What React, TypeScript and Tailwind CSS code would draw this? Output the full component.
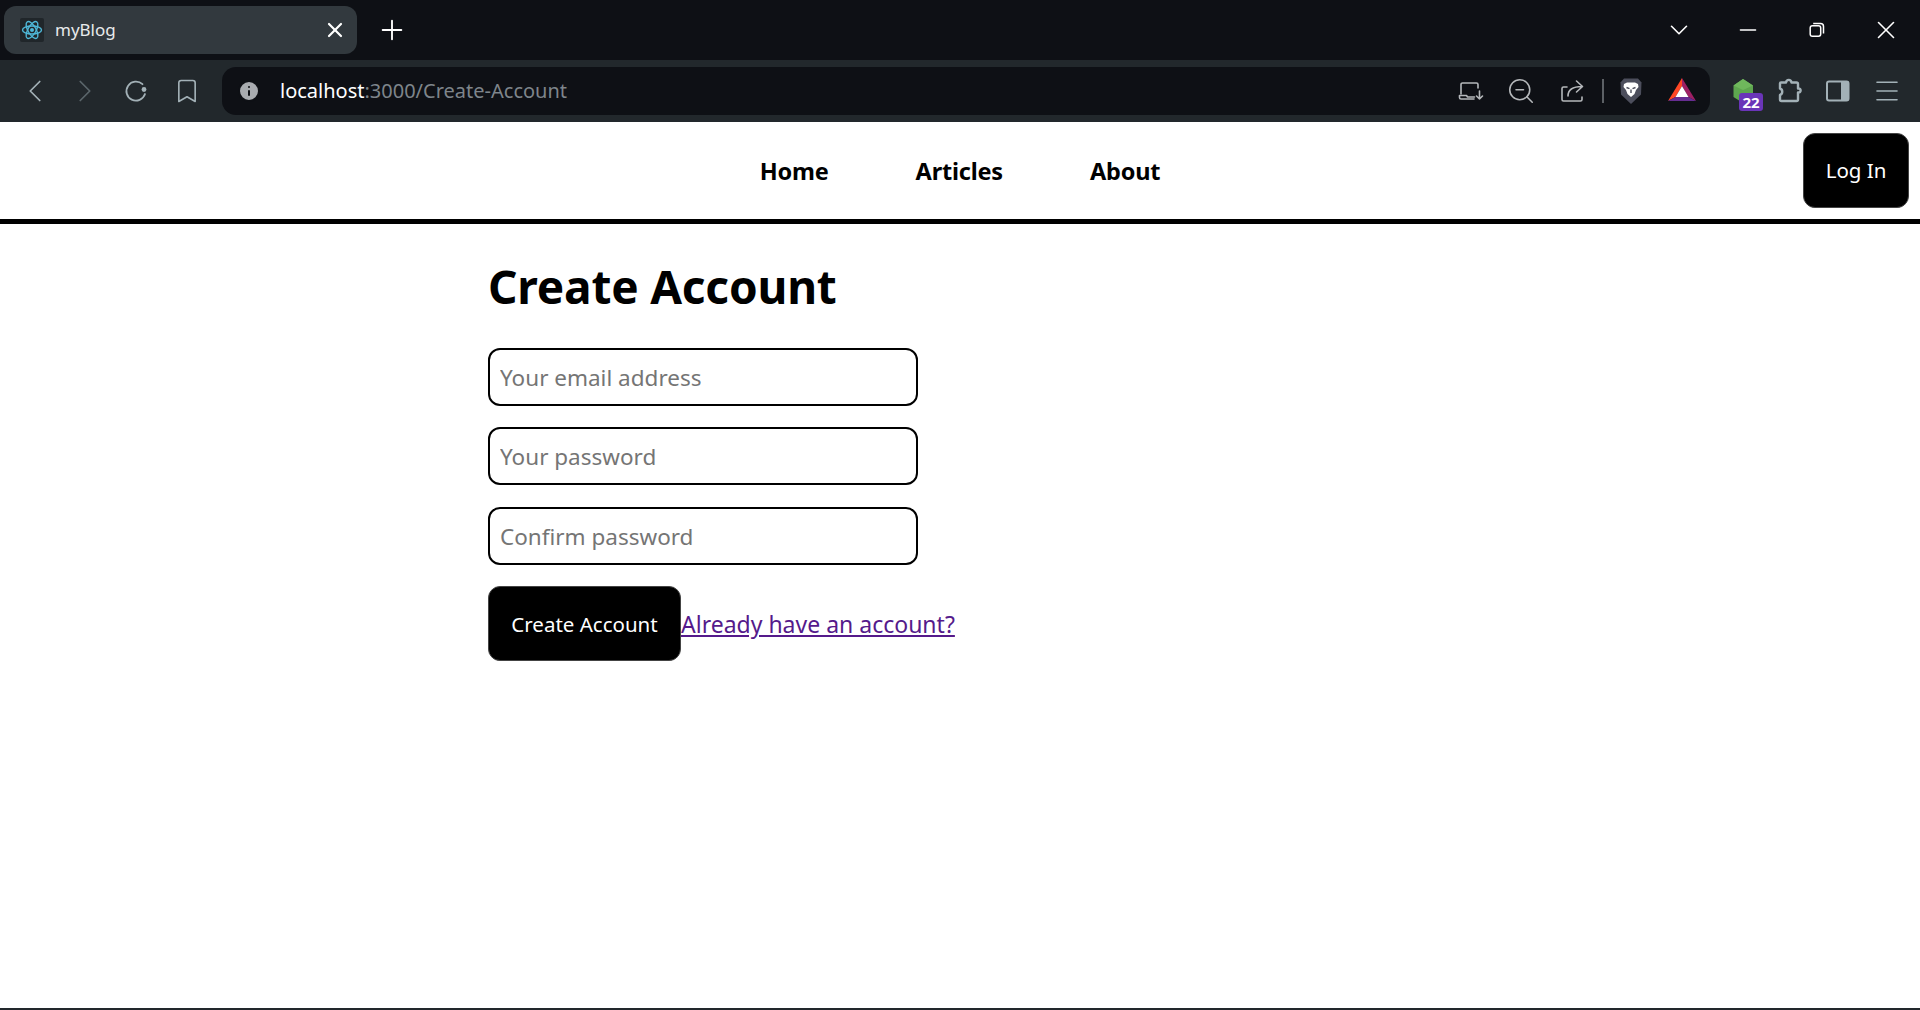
import React from "react";
import { ChevronDown, ChevronLeft, ChevronRight, Menu, Minus, Plus, X, Bookmark, Info, ZoomOut } from "lucide-react";

function ReactLogo() {
  return (
    <div className="w-[24px] h-[24px] bg-[#20262a] rounded-[2px] flex items-center justify-center">
      <svg width="22" height="22" viewBox="0 0 22 22" fill="none" stroke="#4fb8d8" strokeWidth="1.4">
        <circle cx="11" cy="11" r="2" fill="#4fb8d8" stroke="none" />
        <ellipse cx="11" cy="11" rx="9.5" ry="4" />
        <ellipse cx="11" cy="11" rx="9.5" ry="4" transform="rotate(60 11 11)" />
        <ellipse cx="11" cy="11" rx="9.5" ry="4" transform="rotate(120 11 11)" />
      </svg>
    </div>
  );
}

function RestoreIcon() {
  return (
    <svg width="16" height="16" viewBox="0 0 16 16" fill="none" stroke="white" strokeWidth="1.5">
      <rect x="1.2" y="3.8" width="10.5" height="10.5" rx="2.2" />
      <path d="M4.2 1.5h7.3a3 3 0 0 1 3 3v7" />
    </svg>
  );
}

function ReloadIcon() {
  return (
    <svg width="24" height="24" viewBox="0 0 24 24" fill="none" stroke="#a3b1b7" strokeWidth="1.8" strokeLinecap="round">
      <path d="M18.5 5.2A9.5 9.5 0 1 0 21 15" />
      <circle cx="20" cy="10.5" r="2.4" fill="#a3b1b7" stroke="none" />
    </svg>
  );
}

function CastIcon() {
  return (
    <svg width="26" height="20" viewBox="0 0 26 20" fill="none" stroke="#b5b8bb" strokeWidth="1.6" strokeLinecap="round" strokeLinejoin="round">
      <path d="M3 13V3.5A1.5 1.5 0 0 1 4.5 2h14A1.5 1.5 0 0 1 20 3.5V7" />
      <path d="M1.5 14.5h7l1 1.5h7M1.5 14.5v2A1.5 1.5 0 0 0 3 18h13" />
      <path d="M21.5 10v8M18.5 15l3 3 3-3" />
    </svg>
  );
}

function ShareIcon() {
  return (
    <svg width="24" height="24" viewBox="0 0 24 24" fill="none" stroke="#b5b8bb" strokeWidth="1.6" strokeLinecap="round" strokeLinejoin="round">
      <path d="M7 8H3.5A1.5 1.5 0 0 0 2 9.5v11A1.5 1.5 0 0 0 3.5 22h17a1.5 1.5 0 0 0 1.5-1.5V18" />
      <path d="M8 17c0-6 4-9.5 14-9.5M16.5 2l6 5.5-6 5.5" />
    </svg>
  );
}

function LionIcon() {
  return (
    <svg width="24" height="28" viewBox="0 0 24 28">
      <path d="M5 1.5h14l3.500 4-.5 12L12 27 2 17.500l-.5-12z" fill="#4c4e5c" />
      <path d="M5 7l3-1.500h8L19 7l.5 3-2.500 3-1.500 4L12 20l-3.500-3L7 13l-2.500-3z" fill="#ffffff" />
      <path d="M7.500 10.500l3 1.200M16.500 10.500l-3 1.200M12 12.500v3.500" stroke="#4c4e5c" strokeWidth="1.4" fill="none" />
    </svg>
  );
}

function BatIcon() {
  return (
    <svg width="28" height="24" viewBox="0 0 28 24" className="mt-[-2px]">
      <path d="M14 0L0 23l7.500-4L14 8z" fill="#ff4724" />
      <path d="M14 0l14 23-7.500-4L14 8z" fill="#9e1f63" />
      <path d="M0 23l7.500-4h13l7.500 4z" fill="#662d91" />
      <path d="M14 8l-6.500 11h13z" fill="#ffffff" />
    </svg>
  );
}

function NodeExtension() {
  return (
    <div className="relative w-[32px] h-[34px] ml-[22px]">
      <svg width="24" height="26" viewBox="0 0 24 26" className="mt-[4px]">
        <path d="M11 1L21 7.500V19l-10 6-9.500-6V7.500z" fill="#5ea64f" />
        <path d="M11 1L21 7.500 11 12 1.500 7.500z" fill="#6fb85c" />
      </svg>
      <div className="absolute left-[7px] top-[19px] w-[24px] h-[18px] rounded-[3px] bg-[#6a35b8] text-white text-[15px] leading-[18px] font-bold text-center">22</div>
    </div>
  );
}

function PuzzleIcon() {
  return (
    <svg width="26" height="26" viewBox="0 0 26 26" fill="none" stroke="#a3b1b7" strokeWidth="2.4" strokeLinejoin="round" className="ml-[13px]">
      <path d="M4 4.500H9c.5-3.500 5-3.500 5.500 0h5a1.500 1.500 0 0 1 1.500 1.500v4.500c3.500-.5 3.500 4.500 0 4v7a1.500 1.500 0 0 1-1.500 1.500h-15A1.500 1.500 0 0 1 3 21.500V17c3-1 3-5.500 0-6.500v-5a1 1 0 0 1 1-1z" />
    </svg>
  );
}

function SidebarIcon() {
  return (
    <svg width="24" height="22" viewBox="0 0 24 22" className="ml-[23px]">
      <rect x="1" y="1.5" width="21.5" height="19" rx="2" fill="none" stroke="#a3b1b7" strokeWidth="2" />
      <rect x="15" y="1.5" width="7.5" height="19" fill="#a3b1b7" />
    </svg>
  );
}

export default function App() {
  return (
    <div className="h-screen flex flex-col bg-white overflow-hidden font-['Noto_Sans',sans-serif]">
      {/* tab strip */}
      <div className="h-[60px] bg-[#0e1015] flex items-center pl-[4px] shrink-0">
        <div className="w-[353px] h-[48px] shrink-0 rounded-[12px] bg-[#32393e] flex items-center pl-[16px] pr-[10px]">
          <ReactLogo />
          <span className="ml-[11px] flex-1 text-[#e8eaeb] text-[17px]">myBlog</span>
          <X size={24} color="white" strokeWidth={2.2} />
        </div>
        <Plus size={32} color="white" strokeWidth={1.4} className="ml-[19px]" />
        <div className="flex-1" />
        <div className="flex items-center">
          <div className="w-[69px] flex justify-center"><ChevronDown size={30} color="white" strokeWidth={1.3} /></div>
          <div className="w-[69px] flex justify-center"><Minus size={26} color="white" strokeWidth={1.4} /></div>
          <div className="w-[69px] flex justify-center"><RestoreIcon /></div>
          <div className="w-[69px] flex justify-center"><X size={30} color="white" strokeWidth={1.3} /></div>
        </div>
      </div>
      {/* toolbar */}
      <div className="h-[62px] bg-[#22282c] flex items-center shrink-0 pl-[10px]">
        <div className="w-[212px] flex items-center">
          <div className="w-[50px] flex justify-center"><ChevronLeft size={38} color="#a3b1b7" strokeWidth={1.1} /></div>
          <div className="w-[50px] flex justify-center"><ChevronRight size={38} color="#5b666b" strokeWidth={1.1} /></div>
          <div className="w-[50px] ml-[1px] flex justify-center"><ReloadIcon /></div>
          <div className="w-[50px] ml-[1px] flex justify-center"><Bookmark size={28} color="#a3b1b7" strokeWidth={1.4} /></div>
        </div>
        <div className="w-[1488px] h-[48px] shrink-0 rounded-[14px] bg-[#0e1015] flex items-center pl-[15px] pr-[14px]">
          <Info size={24} color="#0e1015" fill="#a9acb0" strokeWidth={2} />
          <span className="ml-[19px] text-[20px] text-white">localhost</span>
          <span className="text-[20px] text-[#7e858b]">:3000/Create-Account</span>
          <div className="flex-1" />
          <div className="flex items-center">
            <CastIcon />
            <ZoomOut size={30} color="#b5b8bb" strokeWidth={1.25} className="ml-[22px]" />
            <div className="ml-[24px]"><ShareIcon /></div>
            <div className="ml-[18px] w-[2px] h-[24px] bg-[#5c6065]" />
            <div className="ml-[15px]"><LionIcon /></div>
            <div className="ml-[25px]"><BatIcon /></div>
          </div>
        </div>
        <NodeExtension />
        <PuzzleIcon />
        <SidebarIcon />
        <Menu size={30} color="#a3b1b7" strokeWidth={1.3} className="ml-[22px]" />
      </div>
      {/* site nav */}
      <nav className="h-[102px] shrink-0 border-b-[5px] border-black grid grid-cols-[1fr_auto_1fr] items-center px-[11px]">
        <div />
        <div className="flex gap-[87px] pt-[2px] text-[23.5px] font-bold text-black tracking-[-0.2px]">
          <a>Home</a>
          <a>Articles</a>
          <a>About</a>
        </div>
        <button className="justify-self-end w-[106px] h-[75px] rounded-[12px] bg-black text-white text-[20.5px] border border-[#444]">Log In</button>
      </nav>
      {/* create account form */}
      <main className="flex-1 w-[944px] mx-auto">
        <h1 className="mt-[33px] text-[46px] leading-[58px] font-bold text-black tracking-[-0.2px]">Create Account</h1>
        <input placeholder="Your email address" className="block mt-[33px] w-[430px] h-[58px] px-[10px] text-[22.5px] border-2 border-black rounded-[12px] placeholder:text-[#757575]" />
        <input placeholder="Your password" className="block mt-[21px] w-[430px] h-[58px] px-[10px] text-[22.5px] border-2 border-black rounded-[12px] placeholder:text-[#757575]" />
        <input placeholder="Confirm password" className="block mt-[22px] w-[430px] h-[58px] px-[10px] text-[22.5px] border-2 border-black rounded-[12px] placeholder:text-[#757575]" />
        <div className="mt-[21px] flex items-center">
          <button className="w-[193px] h-[75px] pt-[2px] rounded-[12px] bg-black text-white text-[20.5px] border border-[#444]">Create Account</button>
          <a href="#" className="pt-[2px] text-[23px] text-[#551a8b] underline">Already have an account?</a>
        </div>
      </main>
      <div className="h-[2px] bg-[#22282c] shrink-0" />
    </div>
  );
}
